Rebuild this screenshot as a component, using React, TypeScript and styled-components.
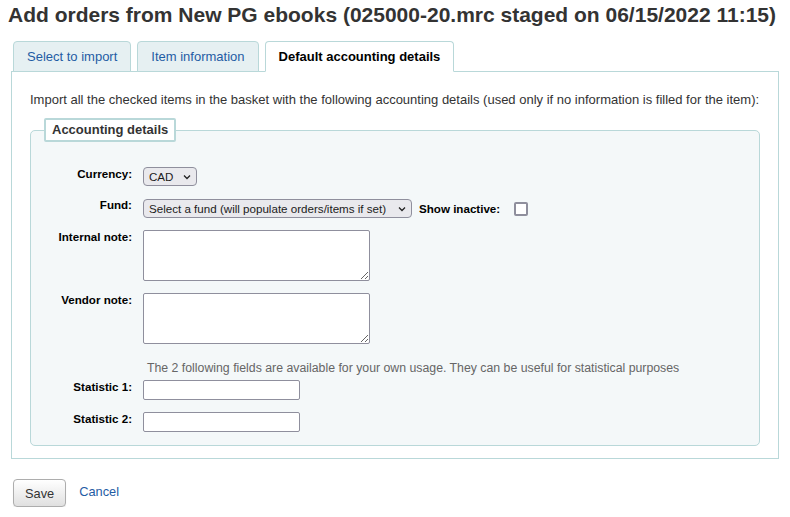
import React from "react";
import styled, { createGlobalStyle } from "styled-components";

const Global = createGlobalStyle`
  html, body { margin: 0; padding: 0; background: #fff; }
  body { font-family: "Liberation Sans", Arial, sans-serif; color: #333; font-size: 13px; }
  * { box-sizing: border-box; }
`;

const Page = styled.div`
  padding: 0 8px;
`;

const Title = styled.h1`
  margin: 0;
  padding-top: 3px;
  font-size: 21px;
  line-height: 24px;
  font-weight: bold;
  color: #333;
  white-space: nowrap;
`;

const TabList = styled.ul`
  list-style: none;
  margin: 14px 0 0 5px;
  padding: 0;
  display: flex;
  gap: 6px;
  position: relative;
  z-index: 1;
`;

const Tab = styled.li<{ $active?: boolean }>`
  height: 31px;
  padding: 0 13px;
  display: flex;
  align-items: center;
  border: 1px solid #b9d8d9;
  border-bottom-color: ${(p) => (p.$active ? "#fff" : "#b9d8d9")};
  border-radius: 4px 4px 0 0;
  background: ${(p) => (p.$active ? "#fff" : "#e6f0f2")};
  color: ${(p) => (p.$active ? "#000" : "#1f5ca4")};
  font-weight: ${(p) => (p.$active ? "bold" : "normal")};
  font-size: 13px;
  cursor: pointer;
`;

const Panel = styled.div`
  margin: -1px 3px 0 3px;
  border: 1px solid #b9d8d9;
  background: #fff;
  padding: 20px 18px 12px 18px;
`;

const Intro = styled.p`
  margin: 0 0 10px 0;
  font-size: 13px;
  line-height: 16px;
  color: #333;
  white-space: nowrap;
`;

const Fieldset = styled.fieldset`
  margin: 0;
  padding: 0 0 13px 0;
  border: 1px solid #b9d8d9;
  border-radius: 5px;
  background: #f4f8f9;
  min-width: 0;
`;

const Legend = styled.legend`
  margin-left: 13px;
  padding: 3px 6px;
  background: #fff;
  border: 2px solid #b9d8d9;
  border-radius: 2px;
  font-weight: bold;
  font-size: 13px;
  line-height: 14px;
  color: #333;
`;

const Rows = styled.ol`
  list-style: none;
  margin: 25px 0 0 0;
  padding: 0;
  display: flex;
  flex-direction: column;
  gap: 12px;
`;

const Row = styled.li`
  display: grid;
  grid-template-columns: 101px auto;
  column-gap: 11px;
  align-items: start;
`;

const Label = styled.label`
  text-align: right;
  font-weight: bold;
  font-size: 11.6px;
  line-height: 14px;
  color: #000;
  white-space: nowrap;
`;

const Field = styled.div`
  display: flex;
  align-items: center;
  min-width: 0;
`;

const SelectWrap = styled.div<{ $w: number }>`
  position: relative;
  width: ${(p) => p.$w}px;
  height: 19px;
`;

const Select = styled.select`
  appearance: none;
  -webkit-appearance: none;
  width: 100%;
  height: 100%;
  margin: 0;
  padding: 0 20px 0 5px;
  border: 1px solid #8f8f9d;
  border-radius: 4px;
  background: #e9e9ed;
  color: #1b1b1b;
  font-family: "Liberation Sans", Arial, sans-serif;
  font-size: 11.6px;
  line-height: 17px;
`;

const Chevron = styled.svg`
  position: absolute;
  right: 6px;
  top: 7px;
  width: 8px;
  height: 6px;
  pointer-events: none;
`;

const InlineLabel = styled.span`
  margin-left: 7px;
  font-weight: bold;
  font-size: 11.6px;
  color: #000;
  white-space: nowrap;
`;

const Check = styled.input`
  appearance: none;
  -webkit-appearance: none;
  margin: 4px 0 2px 14px;
  width: 14px;
  height: 14px;
  border: 2px solid #8f8f9d;
  border-radius: 2px;
  background: #fff;
`;

const TextArea = styled.textarea`
  width: 227px;
  height: 51px;
  margin: 0;
  border: 1px solid #8f8f9d;
  border-radius: 2px;
  background: #fff;
  font-family: "Liberation Sans", Arial, sans-serif;
  font-size: 12px;
  display: block;
`;

const TextInput = styled.input`
  width: 157px;
  height: 20px;
  margin: 0;
  border: 1px solid #8f8f9d;
  border-radius: 2px;
  background: #fff;
  font-family: "Liberation Sans", Arial, sans-serif;
  font-size: 12px;
`;

const Hint = styled.li`
  padding-left: 116px;
  margin: 5px 0 -7px 0;
  font-size: 12.3px;
  line-height: 14px;
  color: #666;
  white-space: nowrap;
`;

const Actions = styled.div`
  display: flex;
  align-items: center;
  gap: 13px;
  margin: 20px 0 0 5px;
`;

const Button = styled.button`
  height: 28px;
  padding: 0 11px;
  border: 1px solid #adadad;
  border-radius: 4px;
  background: linear-gradient(#ffffff, #e0e0e0);
  color: #333;
  font-family: "Liberation Sans", Arial, sans-serif;
  font-size: 12.8px;
  box-shadow: 0 1px 1px rgba(0, 0, 0, 0.08);
`;

const LinkA = styled.a`
  color: #1f5ca4;
  font-size: 12.8px;
  text-decoration: none;
  margin-top: -3px;
`;

const Dropdown = ({ w, value }: { w: number; value: string }) => (
  <SelectWrap $w={w}>
    <Select defaultValue={value}>
      <option value={value}>{value}</option>
    </Select>
    <Chevron viewBox="0 0 8 6">
      <path d="M1 1.5 L4 4.5 L7 1.5" fill="none" stroke="#222" strokeWidth="1.3" />
    </Chevron>
  </SelectWrap>
);

export default function App() {
  return (
    <Page>
      <Global />
      <Title>Add orders from New PG ebooks (025000-20.mrc staged on 06/15/2022 11:15)</Title>
      <TabList>
        <Tab>Select to import</Tab>
        <Tab>Item information</Tab>
        <Tab $active>Default accounting details</Tab>
      </TabList>
      <Panel>
        <Intro>
          Import all the checked items in the basket with the following accounting details (used only if no
          information is filled for the item):
        </Intro>
        <Fieldset>
          <Legend>Accounting details</Legend>
          <Rows>
            <Row>
              <Label>Currency:</Label>
              <Field>
                <Dropdown w={54} value="CAD" />
              </Field>
            </Row>
            <Row>
              <Label>Fund:</Label>
              <Field>
                <Dropdown w={269} value="Select a fund (will populate orders/items if set)" />
                <InlineLabel>Show inactive:</InlineLabel>
                <Check type="checkbox" />
              </Field>
            </Row>
            <Row>
              <Label>Internal note:</Label>
              <Field>
                <TextArea />
              </Field>
            </Row>
            <Row>
              <Label>Vendor note:</Label>
              <Field>
                <TextArea />
              </Field>
            </Row>
            <Hint>
              The 2 following fields are available for your own usage. They can be useful for statistical purposes
            </Hint>
            <Row>
              <Label>Statistic 1:</Label>
              <Field>
                <TextInput type="text" />
              </Field>
            </Row>
            <Row>
              <Label>Statistic 2:</Label>
              <Field>
                <TextInput type="text" />
              </Field>
            </Row>
          </Rows>
        </Fieldset>
      </Panel>
      <Actions>
        <Button>Save</Button>
        <LinkA href="#">Cancel</LinkA>
      </Actions>
    </Page>
  );
}
